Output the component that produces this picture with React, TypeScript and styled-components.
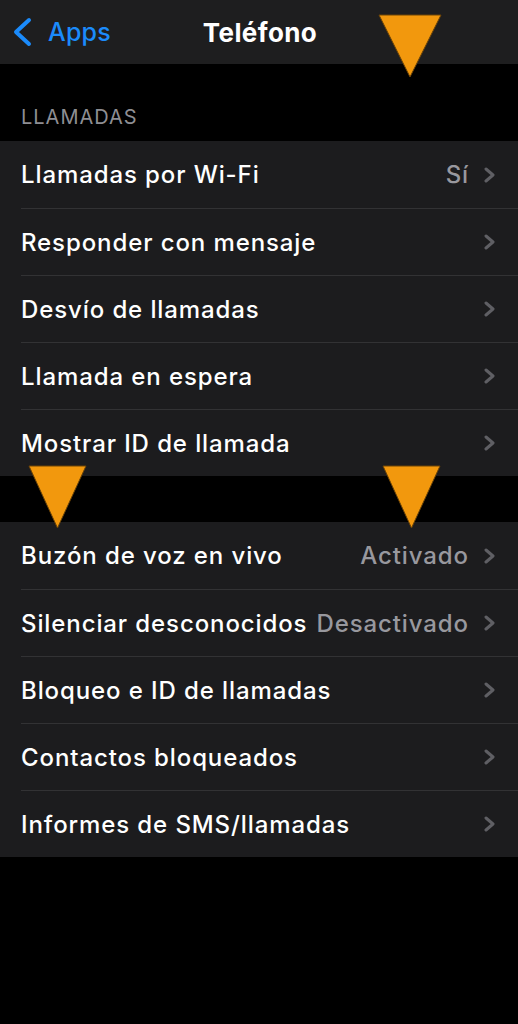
import styled, { createGlobalStyle } from "styled-components";

const Global = createGlobalStyle`
  html, body {
    margin: 0;
    padding: 0;
    background: #000;
  }
  body {
    font-family: Inter, "Liberation Sans", sans-serif;
    -webkit-font-smoothing: antialiased;
  }
`;

const Screen = styled.div`
  position: relative;
  width: 518px;
  height: 1024px;
  background: #000;
  overflow: hidden;
`;

const NavBar = styled.header`
  display: grid;
  grid-template-columns: 1fr auto 1fr;
  align-items: center;
  height: 64px;
  padding: 0 12px 0 12px;
  box-sizing: border-box;
  background: #1e1e1f;
`;

const Back = styled.div`
  display: flex;
  align-items: center;
  gap: 16px;
  color: #1b8bfb;
  font-size: 25px;
  font-weight: 500;
  letter-spacing: 0.2px;
`;

const Title = styled.h1`
  margin: 0 0 0 2px;
  color: #fff;
  font-size: 26px;
  font-weight: 700;
  letter-spacing: 0.4px;
`;

const SectionHeader = styled.div<{ $height: number }>`
  height: ${(p) => p.$height}px;
  display: flex;
  align-items: flex-end;
  padding: 0 21px 12px;
  box-sizing: border-box;
  color: #8e8e93;
  font-size: 20px;
  letter-spacing: 1px;
`;

const Group = styled.ul`
  margin: 0;
  padding: 0;
  list-style: none;
  background: #1c1c1e;
`;

const Row = styled.li`
  display: flex;
  align-items: center;
  height: 67px;
  margin-left: 21px;
  padding-right: 21px;
  box-sizing: border-box;
  border-top: 1px solid #323234;
  &:first-child {
    border-top: none;
  }
`;

const Label = styled.span`
  flex: 1;
  color: #fff;
  font-size: 24px;
  font-weight: 500;
  white-space: nowrap;
  letter-spacing: 0.9px;
`;

const Value = styled.span`
  color: #98989e;
  font-size: 24px;
  font-weight: 500;
  letter-spacing: 0.9px;
  margin-right: 14px;
  white-space: nowrap;
`;

const Marker = styled.svg<{ $x: number; $y: number }>`
  position: absolute;
  left: ${(p) => p.$x}px;
  top: ${(p) => p.$y}px;
`;

const Chevron = () => (
  <svg width="14" height="16" viewBox="0 0 14 16">
    <path d="M3 2 L10 8 L3 14" fill="none" stroke="#5f5f64" strokeWidth="3" strokeLinecap="round" strokeLinejoin="round" />
  </svg>
);

const Triangle = ({ x, y, w }: { x: number; y: number; w: number }) => (
  <Marker $x={x} $y={y} width={w} height="64" viewBox={`0 0 ${w} 64`}>
    <polygon points={`1,1 ${w - 1},1 ${w / 2},63`} fill="#f2980d" stroke="#6b4307" strokeWidth="1" />
  </Marker>
);

const calls = [
  { label: "Llamadas por Wi-Fi", value: "Sí" },
  { label: "Responder con mensaje" },
  { label: "Desvío de llamadas" },
  { label: "Llamada en espera" },
  { label: "Mostrar ID de llamada" },
];

const others = [
  { label: "Buzón de voz en vivo", value: "Activado" },
  { label: "Silenciar desconocidos", value: "Desactivado" },
  { label: "Bloqueo e ID de llamadas" },
  { label: "Contactos bloqueados" },
  { label: "Informes de SMS/llamadas" },
];

type Item = { label: string; value?: string };

function Settings({ items }: { items: Item[] }) {
  return (
    <Group>
      {items.map((it) => (
        <Row key={it.label}>
          <Label>{it.label}</Label>
          {it.value && <Value>{it.value}</Value>}
          <Chevron />
        </Row>
      ))}
    </Group>
  );
}

export default function App() {
  return (
    <Screen>
      <Global />
      <NavBar>
        <Back>
          <svg width="20" height="30" viewBox="0 0 20 30">
            <path d="M17 3 L4 15 L17 27" fill="none" stroke="#1b8bfb" strokeWidth="4" strokeLinecap="round" strokeLinejoin="round" />
          </svg>
          Apps
        </Back>
        <Title>Teléfono</Title>
        <div />
      </NavBar>
      <SectionHeader $height={77}>LLAMADAS</SectionHeader>
      <Settings items={calls} />
      <SectionHeader $height={46} />
      <Settings items={others} />
      <Triangle x={378} y={14} w={64} />
      <Triangle x={28} y={465} w={59} />
      <Triangle x={382} y={465} w={59} />
    </Screen>
  );
}
